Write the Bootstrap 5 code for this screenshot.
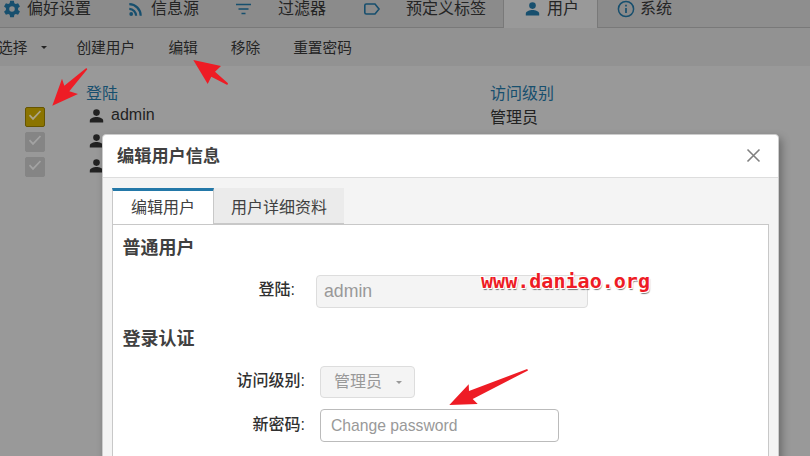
<!DOCTYPE html>
<html lang="zh-CN">
<head>
<meta charset="utf-8">
<meta name="viewport" content="width=device-width, initial-scale=1">
<title>编辑用户信息</title>
<link href="https://cdn.jsdelivr.net/npm/bootstrap@5.3.0/dist/css/bootstrap.min.css" rel="stylesheet">
<style>
body{font-family:"Liberation Sans","Noto Sans CJK SC",sans-serif;font-size:16px;line-height:20px;color:#222;background:#999;height:456px;overflow:hidden}
.page-area{height:456px}
.top-tabs{height:28px;background:#8e8e8e;border-bottom:1px solid #797979}
.top-tab{height:27px;background:#8b8b8b;color:#242424;white-space:nowrap;padding:0}
.top-tab svg{flex:none;color:#174f6e}
.top-tab span{line-height:20px;margin-top:-1px}
.t-pref{width:111px;padding-left:3px}.t-pref span{margin-left:6px}
.t-feed{width:108px;padding-left:17px}.t-feed span{margin-left:6px}
.t-filter{width:127px;padding-left:16px}.t-filter span{margin-left:26px}
.t-label{width:158px;padding-left:17px;border-right:1px solid #797979}.t-label span{margin-left:25px}
.t-user{width:93px;padding-left:21px;height:28px;background:#999}.t-user span{margin-left:7px}
.t-user svg{margin-top:2px}
.t-sys{width:93px;padding-left:19px;border-left:1px solid #797979}.t-sys span{margin-left:5px}
.tool-row{height:38px;background:#929292;font-size:14.7px;color:#242424;white-space:nowrap;padding-top:1px}
.tool-row span{line-height:20px}
.tool-pick{margin-left:-2px}
.caret{width:0;height:0;border:3.5px solid transparent;border-top-color:currentColor;border-bottom:0}
.tool-row .caret{margin:0 29px 0 14px}
.tool-new{width:59px;margin-right:33px}
.tool-del{margin:0 33px}
.user-head,.user-line{display:grid;grid-template-columns:85px 405px 1fr}
.user-head{color:#174f6e;padding-top:18px;height:39px}
.user-head .col-login{padding-left:1px}
.user-line{height:25px}
.access-name{padding-top:3px}
.check-box{width:20px;height:20px;margin:2px 0 0 25px;border:1px solid #858585;border-radius:2px;background:#858585;color:#a3a3a3}
.check-box.on{background:#8b7400;border-color:#665500;color:#aca58a}
.check-box svg{display:block;margin-top:-1px}
.login-name{padding-left:4px}
.login-name svg{margin:4px 7px 0 0}
.dialog{position:absolute;left:102px;top:134px;width:677px;height:340px;border:1px solid #ccc;border-radius:4px 4px 0 0;background:#f4f4f4;color:#404040;box-shadow:3px 4px 8px rgba(0,0,0,.3)}
.dialog-head{height:43px;background:#fff;border-bottom:1px solid #ddd;border-radius:4px 4px 0 0;padding:0 17px 1px 14px;font-size:17.2px;font-weight:700}
.dialog-tabs{margin:10px 0 0 9px;height:36px}
.dialog-tab{height:36px;background:#ebebeb;border-bottom:1px solid #c8c8c8;width:130px;padding-top:4px}
.dialog-tab.current{width:102px;background:#fff;border:1px solid #c8c8c8;border-top:3px solid #2378a8;border-bottom:0;padding:0}
.dialog-pane{margin:0 9px;height:250px;background:#fff;border:1px solid #c8c8c8}
.dialog-pane h3{font-size:18px;font-weight:700;line-height:24px;margin:0 0 0 9.5px}
.dialog-pane .head-a{padding-top:11px}
.dialog-pane .head-b{padding-top:19px}
.field-row label{text-align:right;font-weight:500;color:#303030;padding-bottom:3px}
.row-login{margin-top:15px}
.row-login label{width:182px;margin-right:21px}
.row-level{margin-top:15px}
.row-level label,.row-pass label{width:192px;margin-right:15px}
.row-pass{margin-top:11px}
.row-pass label{padding-bottom:1px}
.form-control,.pick{line-height:20px;border-radius:4px;color:#999!important}
.f-login{font-size:17.7px;width:272px;height:33px;padding:5px 7px}
.form-control:disabled,.pick{background:#f4f4f4;border:1px solid #ddd}
.f-pass{width:239px;height:33px;padding:5px 10px;border:1px solid #bbb;font-size:15.7px}
.f-pass::placeholder{color:#999;opacity:1}
.pick{width:95px;height:32px;font-size:16px;padding:0 12px 0 13px}
.site-mark{position:absolute;left:481px;top:269px;font:700 19.2px/26px "DejaVu Sans Mono",monospace;color:#ee1c25;text-shadow:0 0 1px #fff,1px 1px 0 #fff,-1px -1px 0 #fff,1px -1px 0 #fff,-1px 1px 0 #fff,1px 2px 1px #777;white-space:nowrap;transform-origin:0 0;transform:scaleX(1.045)}
.arrows{position:absolute;left:0;top:0;pointer-events:none}
</style>
<script src="https://cdn.jsdelivr.net/npm/bootstrap@5.3.0/dist/js/bootstrap.bundle.min.js"></script>
</head>
<body>
<svg width="0" height="0" class="position-absolute">
<symbol id="person" viewBox="0 0 14 14"><circle cx="7" cy="3.6" r="3.3"/><path d="M.3 13.5v-1.8C.3 9.4 4.2 8.1 7 8.1s6.7 1.3 6.7 3.6v1.8z"/></symbol>
<symbol id="tick" viewBox="0 0 18 18"><path d="M3.500 8.200l3.500 3.700L14.500 4" fill="none" stroke="currentColor" stroke-width="1.7"/></symbol>
</svg>
<div class="page-area position-relative overflow-hidden">
  <nav class="top-tabs d-flex align-items-start">
    <div class="top-tab t-pref d-flex align-items-start"><svg width="18" height="18" viewBox="0 0 24 24" fill="currentColor"><path fill-rule="evenodd" d="M9.500 1h5l.6 3.200 1.900 1.100 3.100-1.100 2.500 4.300-2.500 2.200v2.600l2.500 2.200-2.500 4.300-3.100-1.100-1.900 1.100-.6 3.200h-5l-.6-3.200L7 18.700l-3.100 1.100-2.500-4.300 2.500-2.200v-2.600L1.400 8.500l2.500-4.300L7 5.300l1.900-1.100zM12 8.300a3.700 3.700 0 1 0 0 7.400 3.700 3.700 0 0 0 0-7.400z"/></svg><span>偏好设置</span></div>
    <div class="top-tab t-feed d-flex align-items-start"><svg width="17" height="18" viewBox="0 0 17 18"><circle cx="3.200" cy="14" r="1.900" fill="currentColor"/><path d="M1.300 8.800a7 7 0 0 1 6.800 7M1.300 4.200a11.500 11.500 0 0 1 11.400 11.600" fill="none" stroke="currentColor" stroke-width="2.200"/></svg><span>信息源</span></div>
    <div class="top-tab t-filter d-flex align-items-start"><svg width="17" height="18" viewBox="0 0 17 18" fill="none" stroke="currentColor" stroke-width="1.500"><path d="M1 4.500h15M3.500 9h10M6.500 13.500h4"/></svg><span>过滤器</span></div>
    <div class="top-tab t-label d-flex align-items-start"><svg width="18" height="18" viewBox="0 0 18 18" fill="none" stroke="currentColor" stroke-width="1.600"><path d="M1.800 5.500q0-1.500 1.500-1.500H12l4 5-4 5H3.300q-1.500 0-1.500-1.500z"/></svg><span>预定义标签</span></div>
    <div class="top-tab t-user d-flex align-items-start"><svg width="15" height="14" fill="currentColor"><use href="#person" width="15" height="14"/></svg><span>用户</span></div>
    <div class="top-tab t-sys d-flex align-items-start"><svg width="18" height="18" viewBox="0 0 18 18" fill="none" stroke="currentColor" stroke-width="1.500"><circle cx="9" cy="9" r="7.600"/><path d="M9 8v5M9 4.800v1.700" stroke-width="1.700"/></svg><span>系统</span></div>
  </nav>
  <div class="tool-row d-flex align-items-center"><span class="tool-pick">选择</span><i class="caret"></i><span class="tool-new">创建用户</span><span>编辑</span><span class="tool-del">移除</span><span>重置密码</span></div>
  <div class="user-head"><span></span><span class="col-login">登陆</span><span>访问级别</span></div>
  <div class="user-line"><div class="check-box on"><svg width="18" height="18"><use href="#tick"/></svg></div><div class="login-name d-flex align-items-start"><svg width="15" height="14" fill="currentColor"><use href="#person"/></svg><span>admin</span></div><span class="access-name">管理员</span></div>
  <div class="user-line"><div class="check-box"><svg width="18" height="18"><use href="#tick"/></svg></div><div class="login-name d-flex align-items-start"><svg width="15" height="14" fill="currentColor"><use href="#person"/></svg></div></div>
  <div class="user-line"><div class="check-box"><svg width="18" height="18"><use href="#tick"/></svg></div><div class="login-name d-flex align-items-start"><svg width="15" height="14" fill="currentColor"><use href="#person"/></svg></div></div>

  <section class="dialog">
    <div class="dialog-head d-flex align-items-center justify-content-between"><span>编辑用户信息</span><svg width="15" height="15" viewBox="0 0 15 15" stroke="#808080" stroke-width="1.600"><path d="M1.500 1.500l12 12m0-12l-12 12"/></svg></div>
    <div class="dialog-tabs d-flex"><div class="dialog-tab current d-flex align-items-center justify-content-center">编辑用户</div><div class="dialog-tab d-flex align-items-center justify-content-center">用户详细资料</div></div>
    <div class="dialog-pane">
      <h3 class="head-a">普通用户</h3>
      <div class="field-row row-login d-flex align-items-center"><label>登陆:</label><input class="form-control f-login" value="admin" disabled></div>
      <h3 class="head-b">登录认证</h3>
      <div class="field-row row-level d-flex align-items-center"><label>访问级别:</label><div class="pick d-flex align-items-center justify-content-between"><span>管理员</span><i class="caret"></i></div></div>
      <div class="field-row row-pass d-flex align-items-center"><label>新密码:</label><input class="form-control f-pass" placeholder="Change password"></div>
    </div>
  </section>
  <div class="site-mark">www.daniao.org</div>
  <svg class="arrows" width="810" height="456" fill="#ee1c25"><path d="M52.300 105.700L62 78.700l2.300 7L86.300 68l1 1.300-18 22L78 94zM193.300 60l27.700 6-6 5.700 13 11.600-.7 1.700-16-8.300-3.600 7.300zM449.300 404.900l19.400-20.600.3 6.700 58.200-22 .8 1.500-55.300 28.500 5 5z"/></svg>
</div>
</body>
</html>
